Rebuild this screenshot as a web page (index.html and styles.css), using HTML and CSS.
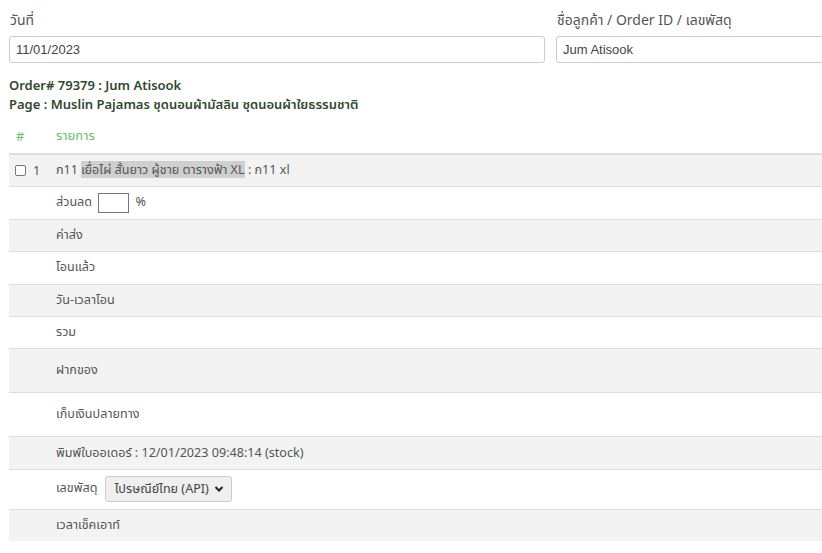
FILE: index.html
```html
<!DOCTYPE html>
<html lang="th">
<head>
<meta charset="utf-8">
<title>Order</title>
<link rel="stylesheet" href="styles.css">
</head>
<body>
<div class="page">
  <div class="filters">
    <div class="field">
      <label class="label">วันที่</label>
      <input class="input" type="text" value="11/01/2023">
    </div>
    <div class="field">
      <label class="label">ชื่อลูกค้า / Order ID / เลขพัสดุ</label>
      <input class="input" type="text" value="Jum Atisook">
    </div>
    <div class="field"></div>
  </div>

  <div class="order-head">
    <div>Order# 79379 : Jum Atisook</div>
    <div>Page : Muslin Pajamas ชุดนอนผ้ามัสลิน ชุดนอนผ้าใยธรรมชาติ</div>
  </div>

  <table class="orders">
    <thead>
      <tr><th class="c1">#</th><th>รายการ</th></tr>
    </thead>
    <tbody>
      <tr class="odd"><td class="c1"><span class="cb"></span><span class="num">1</span></td><td>ก11 <span class="hl">เยื่อไผ่ สั้นยาว ผู้ชาย ตารางฟ้า XL</span> : ก11 xl</td></tr>
      <tr><td class="c1"></td><td>ส่วนลด <span class="disc"></span> %</td></tr>
      <tr class="odd"><td class="c1"></td><td>ค่าส่ง</td></tr>
      <tr><td class="c1"></td><td>โอนแล้ว</td></tr>
      <tr class="odd"><td class="c1"></td><td>วัน-เวลาโอน</td></tr>
      <tr><td class="c1"></td><td>รวม</td></tr>
      <tr class="odd tall"><td class="c1"></td><td>ฝากของ</td></tr>
      <tr class="tall"><td class="c1"></td><td>เก็บเงินปลายทาง</td></tr>
      <tr class="odd"><td class="c1"></td><td>พิมพ์ใบออเดอร์ : 12/01/2023 09:48:14 (stock)</td></tr>
      <tr class="sel-row"><td class="c1"></td><td>เลขพัสดุ <span class="select">ไปรษณีย์ไทย (API)<svg class="chev" viewBox="0 0 10 8" width="10" height="8"><path d="M1.5 2 L5 5.5 L8.5 2" fill="none" stroke="#222" stroke-width="2"/></svg></span></td></tr>
      <tr class="odd"><td class="c1"></td><td>เวลาเช็คเอาท์</td></tr>
    </tbody>
  </table>
</div>
</body>
</html>
```

FILE: styles.css
```css
html, body {
  margin: 0;
  padding: 0;
  background: #fff;
  overflow: hidden;
}
body {
  font-family: "Noto Sans", "Noto Sans Thai", "Liberation Sans", sans-serif;
  color: #555;
  font-size: 13px;
}
.page {
  width: 1620px;
  padding: 10px 9px 0 9px;
}
.filters {
  display: grid;
  grid-template-columns: 536px 536px 536px;
  column-gap: 11px;
}
.field {
  display: flex;
  flex-direction: column;
}
.label {
  font-size: 14px;
  color: #555;
  line-height: 20px;
  height: 26px;
  padding-left: 1px;
}
.input {
  box-sizing: border-box;
  height: 27px;
  border: 1px solid #ccc;
  border-radius: 3px;
  padding: 0 6px;
  font-family: "Liberation Sans", Arial, sans-serif;
  font-size: 13px;
  color: #444;
  margin: 0;
}
.order-head {
  margin-top: 13px;
  font-size: 13px;
  font-weight: 600;
  color: #2e4a2e;
  line-height: 19px;
}
.orders {
  margin-top: 4px;
  width: 813px;
  border-collapse: collapse;
  font-size: 12.6px;
}
.orders th {
  text-align: left;
  font-weight: normal;
  font-size: 13px;
  color: #6cbf6c;
  height: 35px;
  padding: 0;
  vertical-align: middle;
  border-bottom: 2px solid #ddd;
}
.orders th.c1 { padding-left: 7px; }
.orders td {
  height: 31.4px;
  padding: 0;
  border-top: 1px solid #ddd;
  vertical-align: middle;
  color: #555;
}
.orders .c1 {
  width: 41px;
}
.orders th.c1 { width: 40px; }
.orders td.c1 { padding-left: 6px; }
.orders tr.odd td { background: #f3f3f3; }
.orders tr.tall td { height: 43px; }
.orders tr.sel-row td { height: 39px; }
.cb {
  display: inline-block;
  width: 9px;
  height: 9px;
  border: 1px solid #777;
  border-radius: 2px;
  background: #fff;
  vertical-align: -1px;
}
.num { margin-left: 7px; }
.hl { background: #cfcfcf; }
.disc {
  display: inline-block;
  width: 29px;
  height: 18px;
  border: 1px solid #767676;
  vertical-align: middle;
  margin: 0 3px 0 3px;
  background: #fff;
}
.select {
  display: inline-flex;
  align-items: center;
  gap: 5px;
  box-sizing: border-box;
  height: 26px;
  padding: 0 7px 0 9px;
  margin-left: 4px;
  border: 1px solid #ccc;
  border-radius: 3px;
  background: #efefef;
  vertical-align: middle;
  color: #444;
}
.chev { display: block; }
```
